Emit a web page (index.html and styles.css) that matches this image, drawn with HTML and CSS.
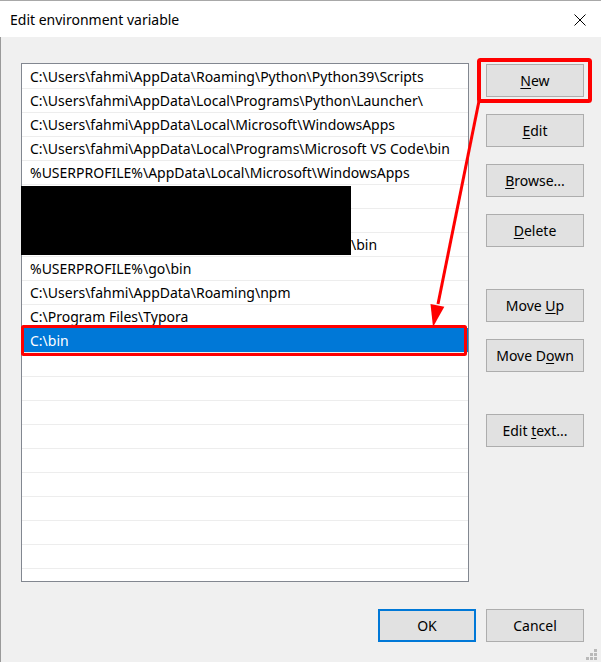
FILE: index.html
```html
<!DOCTYPE html>
<html>
<head>
<meta charset="utf-8">
<title>Edit environment variable</title>
<link rel="stylesheet" href="styles.css">
</head>
<body>
<div class="window">
  <div class="titlebar">
    <span class="title">Edit environment variable</span>
    <svg class="close" width="12" height="12" viewBox="0 0 12 12"><path d="M0.5 0.5 L11.5 11.5 M11.5 0.5 L0.5 11.5" stroke="#000" stroke-width="1" fill="none"/></svg>
  </div>
  <div class="content">
    <div class="main">
      <div class="list">
        <div class="row">C:\Users\fahmi\AppData\Roaming\Python\Python39\Scripts</div>
        <div class="row">C:\Users\fahmi\AppData\Local\Programs\Python\Launcher\</div>
        <div class="row">C:\Users\fahmi\AppData\Local\Microsoft\WindowsApps</div>
        <div class="row">C:\Users\fahmi\AppData\Local\Programs\Microsoft VS Code\bin</div>
        <div class="row">%USERPROFILE%\AppData\Local\Microsoft\WindowsApps</div>
        <div class="row"></div>
        <div class="row"></div>
        <div class="row"><span class="hidden-part"></span>\bin</div>
        <div class="row">%USERPROFILE%\go\bin</div>
        <div class="row">C:\Users\fahmi\AppData\Roaming\npm</div>
        <div class="row">C:\Program Files\Typora</div>
        <div class="row sel"><span class="focus">C:\bin</span></div>
        <div class="row"></div>
        <div class="row"></div>
        <div class="row"></div>
        <div class="row"></div>
        <div class="row"></div>
        <div class="row"></div>
        <div class="row"></div>
        <div class="row"></div>
        <div class="row"></div>
        <div class="row"></div>
      </div>
      <div class="side">
        <div class="group">
          <button class="btn"><span><u>N</u>ew</span></button>
          <button class="btn"><span><u>E</u>dit</span></button>
          <button class="btn"><span><u>B</u>rowse...</span></button>
          <button class="btn"><span><u>D</u>elete</span></button>
        </div>
        <div class="group">
          <button class="btn"><span>Move <u>U</u>p</span></button>
          <button class="btn"><span>Move D<u>o</u>wn</span></button>
        </div>
        <div class="group">
          <button class="btn"><span>Edit <u>t</u>ext...</span></button>
        </div>
      </div>
    </div>
    <div class="footer">
      <button class="btn default"><span>OK</span></button>
      <button class="btn"><span>Cancel</span></button>
    </div>
  </div>
  <svg class="annot" width="601" height="662" viewBox="0 0 601 662">
    <rect x="21" y="186" width="330" height="69" fill="#000"/>
    <rect x="479" y="60" width="111" height="41" rx="1.5" fill="none" stroke="#ff0000" stroke-width="4"/>
    <rect x="22.5" y="326.5" width="443" height="28" rx="1" fill="none" stroke="#ff0000" stroke-width="3"/>
    <line x1="479" y1="101" x2="438" y2="304" stroke="#ff0000" stroke-width="3"/>
    <polygon points="433,327 444.3,306.8 430.5,304" fill="#ff0000"/>
  </svg>
  <svg class="grip" width="12" height="12" viewBox="0 0 12 12">
    <rect x="8" y="0" width="3" height="3" fill="#b9b9b9"/>
    <rect x="4" y="4" width="3" height="3" fill="#b9b9b9"/>
    <rect x="8" y="4" width="3" height="3" fill="#b9b9b9"/>
    <rect x="0" y="8" width="3" height="3" fill="#b9b9b9"/>
    <rect x="4" y="8" width="3" height="3" fill="#b9b9b9"/>
    <rect x="8" y="8" width="3" height="3" fill="#b9b9b9"/>
  </svg>
</div>
</body>
</html>
```

FILE: styles.css
```css
* { box-sizing: border-box; }

body {
  margin: 0;
  background: #f0f0f0;
  font-family: "Noto Sans", "Open Sans", sans-serif;
  font-size: 14px;
  color: #000;
}

.window {
  position: relative;
  width: 601px;
  height: 662px;
  background: #f0f0f0;
  overflow: hidden;
  display: flex;
  flex-direction: column;
}

.titlebar {
  height: 37px;
  flex: none;
  background: #fff;
  border-top: 1px solid #a8a8a8;
  display: flex;
  align-items: center;
  justify-content: space-between;
  padding: 1px 15px 0 10px;
}

.title {
  font-size: 14px;
  line-height: 1;
}

.close { display: block; }

.content {
  flex: 1;
  border-left: 1px solid #9a9a9a;
  display: flex;
  flex-direction: column;
}

.main {
  display: flex;
  padding: 26px 0 0 20px;
  gap: 17px;
}

.list {
  width: 448px;
  height: 519px;
  flex: none;
  border: 1px solid #828790;
  background: #fff;
  overflow: hidden;
}

.row {
  height: 24px;
  display: flex;
  align-items: center;
  padding: 1px 0 0 8px;
  white-space: nowrap;
  line-height: 1;
}

.row + .row { border-top: 1px solid #ededed; }

.row.sel {
  background: #0078d7;
  color: #fff;
  border-top-color: #0078d7;
}

.hidden-part {
  display: inline-block;
  width: 321px;
}

.side {
  display: flex;
  flex-direction: column;
  gap: 42px;
  padding-top: 1px;
}

.group {
  display: flex;
  flex-direction: column;
  gap: 17px;
}

.btn {
  width: 98px;
  height: 33px;
  border: 1px solid #adadad;
  background: #e1e1e1;
  font-family: inherit;
  font-size: 14px;
  color: #000;
  display: flex;
  align-items: center;
  justify-content: center;
  padding: 0;
  margin: 0;
  border-radius: 0;
}

.btn span { white-space: pre; line-height: 1; }

.btn u { text-underline-offset: 2px; }

.btn.default { border: 2px solid #0078d7; }

.footer {
  display: flex;
  justify-content: flex-end;
  gap: 10px;
  padding: 27px 17px 0 0;
}

.annot {
  position: absolute;
  top: 0;
  left: 0;
  pointer-events: none;
}

.grip {
  position: absolute;
  right: 3px;
  bottom: 1px;
}
```
